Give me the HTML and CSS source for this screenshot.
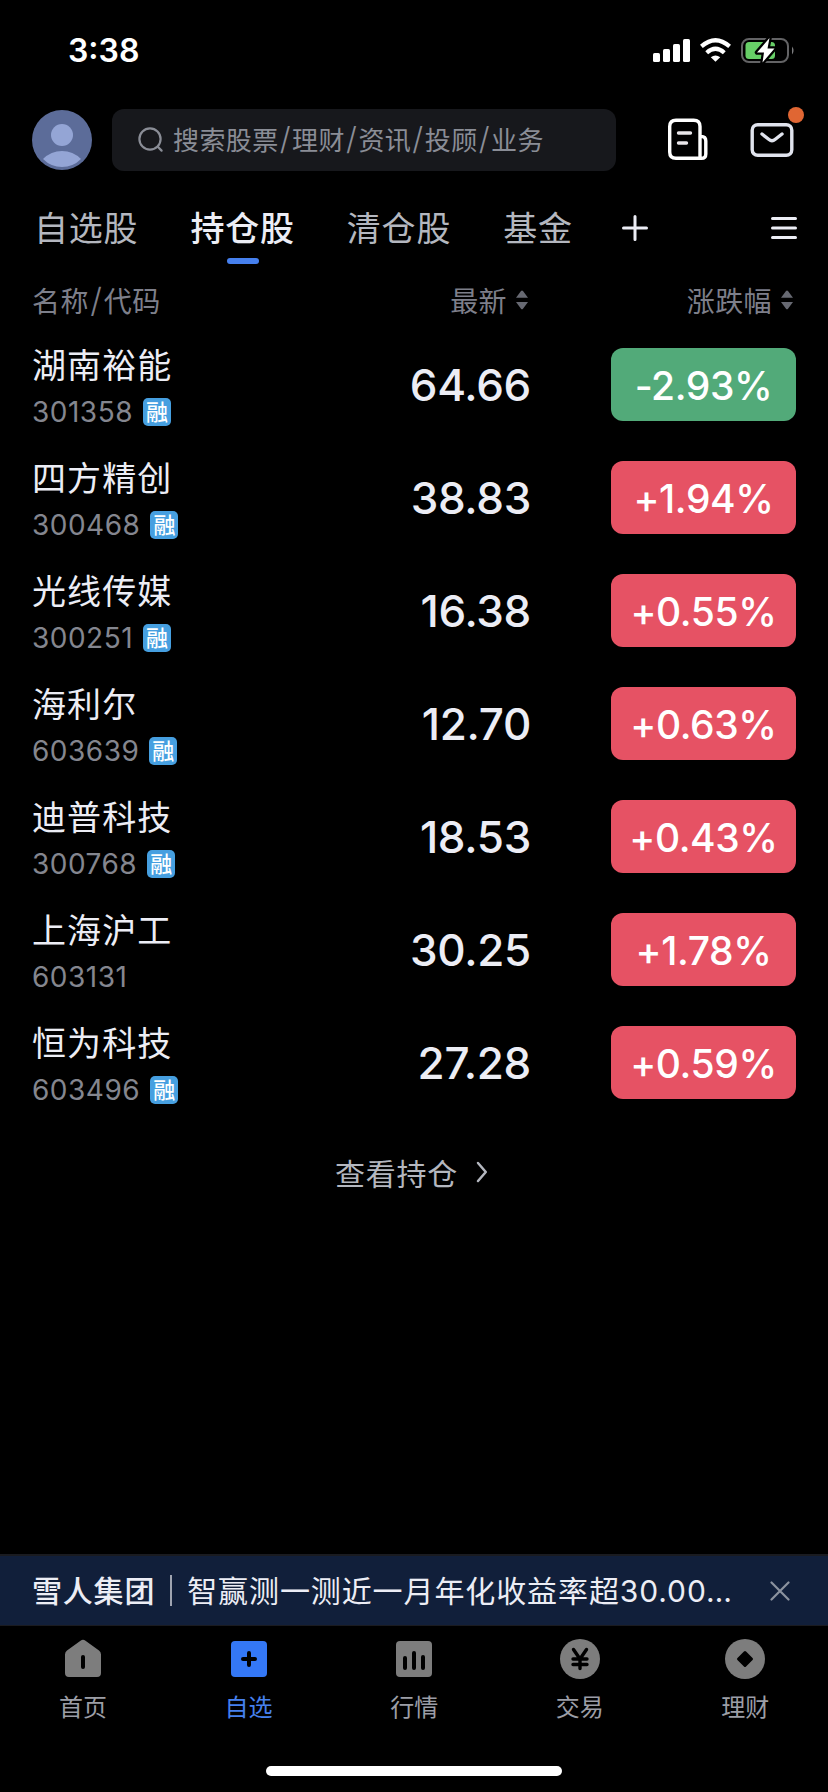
FILE: index.html
```
<!DOCTYPE html>
<html lang="zh-CN">
<head>
  <meta charset="UTF-8">
  <meta name="viewport" content="width=device-width, initial-scale=1.0">
  <title>自选 - 持仓股</title>
  <link rel="stylesheet" href="styles.css">
</head>
<body>
<div class="app">
  <div class="status">
    <span class="time">3:38</span>
    <svg class="status-icons" width="144" height="30" viewBox="0 0 144 30">
      <g fill="#fff">
        <rect x="2" y="18" width="7" height="9" rx="1.6"/>
        <rect x="12" y="14" width="7" height="13" rx="1.6"/>
        <rect x="22" y="9" width="7" height="18" rx="1.6"/>
        <rect x="32" y="4" width="7" height="23" rx="1.6"/>
        <path d="M64.500 26.800 L59.800 22.300 Q64.500 18.500 69.200 22.300 Z"/>
      </g>
      <g fill="none" stroke="#fff" stroke-width="4.200">
        <path d="M50.400 11.400 Q64.500 -1 78.600 11.400"/>
        <path d="M55.700 17.800 Q64.500 9.800 73.300 17.800"/>
      </g>
      <rect x="91" y="4" width="46" height="23" rx="7" fill="none" stroke="#636365" stroke-width="2"/>
      <path d="M141 11.500 Q144 15.500 141 19.500 Z" fill="#7c7c7e"/>
      <rect x="94.500" y="7" width="29.500" height="17" rx="3.500" fill="#67ce67"/>
      <path d="M118.500 3 L106 17.500 H113 L111.500 27.500 L123.500 13.500 H116.500 Z" fill="#fff" stroke="#000" stroke-width="4.500" stroke-linejoin="round" paint-order="stroke"/>
    </svg>
  </div>

  <div class="topbar">
    <svg class="avatar" width="60" height="60" viewBox="0 0 60 60">
      <circle cx="30" cy="30" r="30" fill="#5c6c99"/>
      <circle cx="30" cy="25" r="11" fill="#94a5d5"/>
      <path d="M11 49 Q19 41 30 41 Q41 41 49 49 Q41 57 30 57 Q19 57 11 49 Z" fill="#94a5d5"/>
    </svg>
    <div class="search">
      <svg width="26" height="26" viewBox="0 0 26 26" fill="none" stroke="#8a8d96" stroke-width="2.200" stroke-linecap="round">
        <circle cx="12" cy="12" r="10.600"/>
        <path d="M19.800 19.800 L23.600 23.600"/>
      </svg>
      <span>搜索股票<i>/</i>理财<i>/</i>资讯<i>/</i>投顾<i>/</i>业务</span>
    </div>
    <svg class="news" width="42" height="44" viewBox="0 0 42 44" fill="none" stroke="#fff" stroke-width="3.400" stroke-linecap="round">
      <path d="M33 40.300 V8.500 Q33 2.200 26.700 2.200 H9 Q2.700 2.200 2.700 8.500 V34 Q2.700 40.300 9 40.300 H34.500 Q38.800 40.300 38.800 36 V23 Q38.800 18.400 34 18.400"/>
      <path d="M11.500 15 H23.500 M11.500 25 H19.500" stroke="#e9e6ea"/>
    </svg>
    <div class="mail">
      <svg width="44" height="34" viewBox="0 0 44 34" fill="none" stroke="#e1e4ee" stroke-width="3.400" stroke-linecap="round">
        <rect x="2.200" y="1.700" width="39.600" height="30.600" rx="5.500"/>
        <path d="M12 11 L19 16.500 Q22 19 25 16.500 L32 11"/>
      </svg>
      <span class="dot"></span>
    </div>
  </div>

  <div class="tabs">
    <span class="tab">自选股</span>
    <span class="tab active">持仓股</span>
    <span class="tab">清仓股</span>
    <span class="tab">基金</span>
    <svg class="add" width="26" height="26" viewBox="0 0 26 26" stroke="#ecedf5" stroke-width="3" stroke-linecap="round">
      <path d="M1.500 13 H24.500 M13 1.500 V24.500"/>
    </svg>
    <svg class="menu" width="26" height="22" viewBox="0 0 26 22" stroke="#ecedf5" stroke-width="3" stroke-linecap="round">
      <path d="M1.500 1.500 H24.500 M1.500 11 H24.500 M1.500 20.500 H24.500"/>
    </svg>
  </div>

  <div class="list-head">
    <span class="col-name">名称<i>/</i>代码</span>
    <span class="col-price">最新
      <svg width="12" height="20" viewBox="0 0 12 20" fill="#676972"><path d="M0 7.700 L5 1 Q6 0 7 1 L12 7.700 Z M0 12 H12 L7 18.700 Q6 19.700 5 18.700 Z"/></svg>
    </span>
    <span class="col-change">涨跌幅
      <svg width="12" height="20" viewBox="0 0 12 20" fill="#676972"><path d="M0 7.700 L5 1 Q6 0 7 1 L12 7.700 Z M0 12 H12 L7 18.700 Q6 19.700 5 18.700 Z"/></svg>
    </span>
  </div>

  <div class="list">
    <div class="row">
      <div class="stock"><div class="name">湖南裕能</div><div class="code">301358<b>融</b></div></div>
      <div class="price">64.66</div>
      <div class="change down">-2.93%</div>
    </div>
    <div class="row">
      <div class="stock"><div class="name">四方精创</div><div class="code">300468<b>融</b></div></div>
      <div class="price">38.83</div>
      <div class="change">+1.94%</div>
    </div>
    <div class="row">
      <div class="stock"><div class="name">光线传媒</div><div class="code">300251<b>融</b></div></div>
      <div class="price">16.38</div>
      <div class="change">+0.55%</div>
    </div>
    <div class="row">
      <div class="stock"><div class="name">海利尔</div><div class="code">603639<b>融</b></div></div>
      <div class="price">12.70</div>
      <div class="change">+0.63%</div>
    </div>
    <div class="row">
      <div class="stock"><div class="name">迪普科技</div><div class="code">300768<b>融</b></div></div>
      <div class="price">18.53</div>
      <div class="change">+0.43%</div>
    </div>
    <div class="row">
      <div class="stock"><div class="name">上海沪工</div><div class="code">603131</div></div>
      <div class="price">30.25</div>
      <div class="change">+1.78%</div>
    </div>
    <div class="row">
      <div class="stock"><div class="name">恒为科技</div><div class="code">603496<b>融</b></div></div>
      <div class="price">27.28</div>
      <div class="change">+0.59%</div>
    </div>
  </div>

  <div class="more">
    <span>查看持仓</span>
    <svg width="12" height="22" viewBox="0 0 12 22" fill="none" stroke="#b4b7bf" stroke-width="2.500" stroke-linecap="round" stroke-linejoin="round"><path d="M2 2 L9.800 11 L2 20"/></svg>
  </div>

  <div class="banner">
    <span class="banner-title">雪人集团</span>
    <span class="divider"></span>
    <span class="banner-text">智赢测一测近一月年化收益率超<em>30.00…</em></span>
    <svg class="close" width="20" height="20" viewBox="0 0 20 20" stroke="#8c939f" stroke-width="2.200" stroke-linecap="round"><path d="M1.500 1.500 L18.500 18.500 M18.500 1.500 L1.500 18.500"/></svg>
  </div>

  <div class="nav">
    <div class="nav-item">
      <svg width="40" height="40" viewBox="0 0 40 40">
        <path d="M17.500 1.800 Q20 -0.200 22.500 1.800 L36 11.500 Q38 13 38 15.500 V34 Q38 38 34 38 H6 Q2 38 2 34 V15.500 Q2 13 4 11.500 Z" fill="#7d7d7d"/>
        <path d="M20 18 V28" stroke="#000" stroke-width="4" stroke-linecap="round"/>
      </svg>
      <span>首页</span>
    </div>
    <div class="nav-item current">
      <svg width="40" height="40" viewBox="0 0 40 40">
        <rect x="2" y="2" width="36" height="36" rx="4" fill="#3478f6"/>
        <path d="M14 20 H26 M20 14 V26" stroke="#000" stroke-width="4" stroke-linecap="round"/>
      </svg>
      <span>自选</span>
    </div>
    <div class="nav-item">
      <svg width="40" height="40" viewBox="0 0 40 40">
        <rect x="2" y="2" width="36" height="36" rx="4" fill="#7d7d7d"/>
        <path d="M11 19 V29 M20 14 V29 M29 18 V29" stroke="#000" stroke-width="4" stroke-linecap="round"/>
      </svg>
      <span>行情</span>
    </div>
    <div class="nav-item">
      <svg width="40" height="40" viewBox="0 0 40 40">
        <circle cx="20" cy="20" r="20" fill="#7d7d7d"/>
        <path d="M13.500 10.500 L20 20 L26.500 10.500 M20 20 V29.500 M13 20 H27 M13 25.500 H27" fill="none" stroke="#000" stroke-width="3.400" stroke-linecap="round"/>
      </svg>
      <span>交易</span>
    </div>
    <div class="nav-item">
      <svg width="40" height="40" viewBox="0 0 40 40">
        <circle cx="20" cy="20" r="20" fill="#7d7d7d"/>
        <path d="M20 13.500 L26.500 20 L20 26.500 L13.500 20 Z" fill="#000" stroke="#000" stroke-width="3" stroke-linejoin="round"/>
      </svg>
      <span>理财</span>
    </div>
  </div>
  <div class="home-bar"></div>
</div>
</body>
</html>
```
FILE: styles.css
```
body {
  margin: 0;
  background-color: #000;
  color: #ecedf5;
  font-family: Inter, "Noto Sans CJK SC", sans-serif;
}
.app {
  width: 828px;
  height: 1792px;
  display: flex;
  flex-direction: column;
  overflow: hidden;
}
svg {
  display: block;
  flex: none;
}
i, em {
  font-style: normal;
}
.status {
  height: 100px;
  box-sizing: border-box;
  padding: 0 33px 0 68px;
  display: flex;
  justify-content: space-between;
  align-items: center;
}
.time {
  color: #fff;
  font-size: 32px;
  font-weight: 600;
}
.topbar {
  height: 80px;
  padding: 0 34px 0 32px;
  display: flex;
  align-items: center;
}
.search {
  width: 504px;
  height: 62px;
  margin-left: 20px;
  padding-left: 26px;
  box-sizing: border-box;
  display: flex;
  align-items: center;
  gap: 9px;
  border-radius: 12px;
  background-color: #17181c;
  color: #8a8d96;
  font-size: 26px;
  letter-spacing: 0.4px;
  white-space: nowrap;
}
.search span {
  padding-bottom: 3px;
}
.search i, .list-head i {
  display: inline-block;
  width: 13.5px;
  font-size: 1.2em;
  font-weight: 300;
  line-height: 1;
  text-align: center;
}
.news {
  margin-left: 51px;
}
.mail {
  position: relative;
  margin-left: 41px;
}
.dot {
  position: absolute;
  right: -10px;
  top: -16px;
  width: 16px;
  height: 16px;
  border-radius: 50%;
  background-color: #e06633;
}
.tabs {
  height: 96px;
  padding: 0 31px 0 34px;
  display: flex;
  align-items: center;
  font-size: 34px;
  color: #b4b7bf;
}
.tab {
  height: 96px;
  line-height: 98px;
  margin-right: 52px;
  letter-spacing: 0.8px;
  white-space: nowrap;
}
.tab.active {
  position: relative;
  font-weight: 500;
  color: #ecedf5;
}
.tab.active::after {
  content: "";
  position: absolute;
  left: 50%;
  bottom: 12px;
  width: 32px;
  height: 6px;
  margin-left: -16px;
  border-radius: 3px;
  background-color: #4680ee;
}
.add {
  margin-left: -3px;
}
.menu {
  margin-left: auto;
}
.list-head {
  height: 48px;
  padding: 0 35px 0 32px;
  display: flex;
  align-items: center;
  font-size: 28px;
  letter-spacing: 0.4px;
  color: #7d7f8a;
}
.list-head i {
  width: 15px;
}
.col-name {
  width: 240px;
}
.col-price, .col-change {
  display: flex;
  align-items: center;
  justify-content: flex-end;
  gap: 9px;
}
.col-price {
  width: 256px;
}
.col-change {
  flex: 1;
}
.list {
  padding: 4px 32px 0;
}
.row {
  height: 113px;
  display: flex;
  align-items: center;
}
.stock {
  width: 240px;
  padding-top: 5px;
}
.name {
  height: 49px;
  line-height: 49px;
  font-size: 34px;
  letter-spacing: 1.1px;
}
.code {
  height: 44px;
  display: flex;
  align-items: center;
  color: #84868f;
  font-size: 28px;
  letter-spacing: 0.5px;
}
.code b {
  width: 28px;
  height: 28px;
  margin-left: 10px;
  border-radius: 5px;
  background-color: #469fe0;
  color: #fff;
  font-size: 22px;
  font-weight: 500;
  line-height: 28px;
  letter-spacing: 0;
  text-align: center;
}
.price {
  width: 259px;
  font-size: 44px;
  font-weight: 450;
  letter-spacing: -0.3px;
  text-align: right;
}
.change {
  width: 185px;
  height: 73px;
  margin-left: auto;
  border-radius: 12px;
  background-color: #e65264;
  color: #fff;
  font-size: 39px;
  font-weight: 450;
  letter-spacing: -0.4px;
  line-height: 75px;
  text-align: center;
}
.change.down {
  background-color: #52aa79;
}
.more {
  height: 70px;
  margin-top: 18px;
  padding-right: 5px;
  display: flex;
  align-items: center;
  justify-content: center;
  gap: 18px;
  color: #b4b7bf;
  font-size: 30px;
  letter-spacing: 0.8px;
}
.more span {
  padding-bottom: 1px;
}
.banner {
  height: 72px;
  margin-top: auto;
  padding: 0 38px 0 32px;
  box-sizing: border-box;
  border-top: 2px solid #1a1b20;
  border-bottom: 1px solid #1a1b20;
  display: flex;
  align-items: center;
  background-color: #111f3a;
  font-size: 30px;
  white-space: nowrap;
}
.banner-title, .banner-text {
  padding-bottom: 4px;
}
.banner-title {
  font-weight: 500;
  letter-spacing: 0.8px;
}
.divider {
  width: 2px;
  height: 31px;
  margin: 0 15px;
  background-color: #9fa4b0;
}
.banner-text {
  letter-spacing: 0.9px;
}
.close {
  margin-left: auto;
}
.nav {
  height: 140px;
  display: flex;
}
.nav-item {
  width: 166px;
  margin-right: -0.4px;
  padding-top: 13px;
  box-sizing: border-box;
  display: flex;
  flex-direction: column;
  align-items: center;
  color: #9c9ea6;
  font-size: 24px;
}
.nav-item span {
  height: 36px;
  margin-top: 11px;
  line-height: 36px;
}
.current {
  color: #4680ee;
}
.home-bar {
  width: 296px;
  height: 10px;
  margin: 0 auto 16px;
  border-radius: 5px;
  background-color: #fff;
}
```
